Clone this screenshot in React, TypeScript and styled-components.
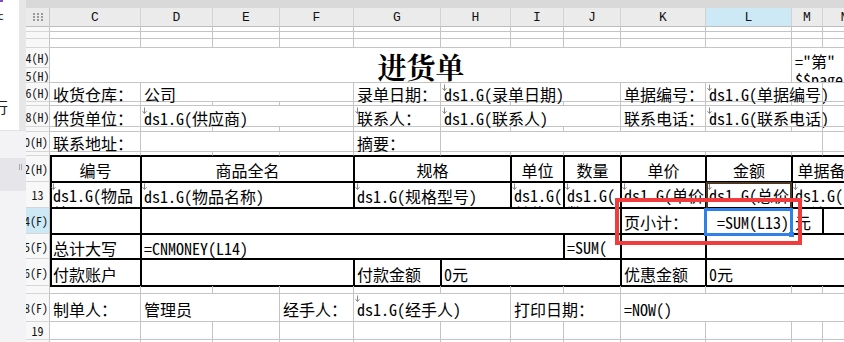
import React from "react";
import styled, { createGlobalStyle, css } from "styled-components";

const GlobalStyle = createGlobalStyle`
  *, *::before, *::after { box-sizing: border-box; }
  html, body { margin: 0; padding: 0; background: #fff; }
  body { font-family: "Noto Sans Mono CJK SC", "Noto Sans CJK SC", sans-serif; }
`;

// column widths C..N, row heights 1..20 (px)
const COLS = [91, 72, 67, 74, 87, 70, 53, 57, 85, 86, 31, 44];
const COL_NAMES = ["C", "D", "E", "F", "G", "H", "I", "J", "K", "L", "M", "N"];
const ROWS = [5, 7, 9, 20, 15, 19, 4, 21, 5, 20, 4, 26, 26, 26, 25, 27, 8, 28, 18, 20];
const ROW_LABELS: Record<number, string> = {
  4: "4(H)", 5: "5(H)", 6: "6(H)", 8: "8(H)", 10: "10(H)", 12: "12(H)", 13: "13",
  14: "14(F)", 15: "15(F)", 16: "16(F)", 18: "18(F)", 19: "19", 20: "20",
};
const ACTIVE_COL = 9;
const ACTIVE_ROW = 14;

const GRID = "#c4c4c4";

type Align = "left" | "center" | "right";

interface CellDef {
  r: number;
  c: number;
  rs?: number;
  cs?: number;
  text?: string;
  lines?: string[];
  align?: Align;
  arrow?: boolean;
  title?: boolean;
}

const DEFS: CellDef[] = [
  { r: 4, c: 0, rs: 2, cs: 10, text: "进货单", title: true, align: "center" },
  { r: 4, c: 10, rs: 2, cs: 2, lines: ['="第"', "$$page_number"] },

  { r: 6, c: 0, text: "收货仓库：" },
  { r: 6, c: 1, cs: 3, text: "公司" },
  { r: 6, c: 4, text: "录单日期：" },
  { r: 6, c: 5, cs: 3, text: "ds1.G(录单日期)", arrow: true },
  { r: 6, c: 8, text: "单据编号：" },
  { r: 6, c: 9, cs: 2, text: "ds1.G(单据编号)", arrow: true },

  { r: 8, c: 0, text: "供货单位：" },
  { r: 8, c: 1, cs: 3, text: "ds1.G(供应商)", arrow: true },
  { r: 8, c: 4, text: "联系人：", arrow: true },
  { r: 8, c: 5, cs: 3, text: "ds1.G(联系人)", arrow: true },
  { r: 8, c: 8, text: "联系电话：" },
  { r: 8, c: 9, cs: 2, text: "ds1.G(联系电话)", arrow: true },

  { r: 10, c: 0, text: "联系地址：" },
  { r: 10, c: 1, cs: 3 },
  { r: 10, c: 4, text: "摘要：" },
  { r: 10, c: 5, cs: 6 },

  { r: 12, c: 0, text: "编号", align: "center" },
  { r: 12, c: 1, cs: 3, text: "商品全名", align: "center" },
  { r: 12, c: 4, cs: 2, text: "规格", align: "center" },
  { r: 12, c: 6, text: "单位", align: "center" },
  { r: 12, c: 7, text: "数量", align: "center" },
  { r: 12, c: 8, text: "单价", align: "center" },
  { r: 12, c: 9, text: "金额", align: "center" },
  { r: 12, c: 10, cs: 2, text: "单据备注", align: "center" },

  { r: 13, c: 0, lines: ["ds1.G(物品", "编号)"], arrow: true },
  { r: 13, c: 1, cs: 3, text: "ds1.G(物品名称)", arrow: true },
  { r: 13, c: 4, cs: 2, text: "ds1.G(规格型号)", arrow: true },
  { r: 13, c: 6, lines: ["ds1.G(", "单位)"], arrow: true },
  { r: 13, c: 7, lines: ["ds1.G(", "数量)"], arrow: true },
  { r: 13, c: 8, lines: ["ds1.G(单价", ")"], arrow: true },
  { r: 13, c: 9, lines: ["ds1.G(总价", ")"], arrow: true },
  { r: 13, c: 10, cs: 2, lines: ["ds1.G(", "备注)"], arrow: true },

  { r: 14, c: 1, cs: 7 },
  { r: 14, c: 8, text: "页小计：" },
  { r: 14, c: 9, text: "=SUM(L13)", align: "right" },
  { r: 14, c: 10, text: "元" },

  { r: 15, c: 0, text: "总计大写" },
  { r: 15, c: 1, cs: 6, text: "=CNMONEY(L14)" },
  { r: 15, c: 7, lines: ["=SUM(", "L14)"] },
  { r: 15, c: 9, cs: 3 },

  { r: 16, c: 0, text: "付款账户" },
  { r: 16, c: 1, cs: 3 },
  { r: 16, c: 4, text: "付款金额" },
  { r: 16, c: 5, cs: 3, text: "0元" },
  { r: 16, c: 8, text: "优惠金额" },
  { r: 16, c: 9, cs: 3, text: "0元" },

  { r: 18, c: 0, text: "制单人：" },
  { r: 18, c: 1, cs: 2, text: "管理员" },
  { r: 18, c: 3, text: "经手人：" },
  { r: 18, c: 4, cs: 2, text: "ds1.G(经手人)", arrow: true },
  { r: 18, c: 6, cs: 2, text: "打印日期：" },
  { r: 18, c: 8, cs: 4, text: "=NOW()" },
];

// fill every uncovered cell with an empty one so the gridlines show
function buildCells(): CellDef[] {
  const taken = new Set<string>();
  DEFS.forEach((d) => {
    for (let r = d.r; r < d.r + (d.rs ?? 1); r++)
      for (let c = d.c; c < d.c + (d.cs ?? 1); c++) taken.add(`${r}-${c}`);
  });
  const out = [...DEFS];
  ROWS.forEach((_, ri) => {
    COLS.forEach((__, c) => {
      const r = ri + 1;
      if (!taken.has(`${r}-${c}`)) out.push({ r, c });
    });
  });
  return out;
}

const Screen = styled.div`
  width: 844px;
  height: 342px;
  overflow: hidden;
  display: flex;
  background: #fff;
`;

const LeftPanel = styled.div`
  width: 26px;
  flex: none;
  display: flex;
  flex-direction: column;
`;

const LeftTop = styled.div`
  height: 130px;
  display: flex;
`;

const LeftWhite = styled.div`
  width: 19px;
  background: #fff;
  overflow: hidden;
  display: flex;
  flex-direction: column;
  color: #222;
`;

const Accent = styled.div`
  width: 3px;
  height: 2px;
  background: #7a4fc0;
`;

const Clipped = styled.div<{ $size: number; $shift: number; $gap: number }>`
  margin-top: ${(p) => p.$gap}px;
  margin-left: ${(p) => p.$shift}px;
  font-size: ${(p) => p.$size}px;
  line-height: 1;
  white-space: nowrap;
  font-family: "Noto Sans CJK SC", sans-serif;
`;

const LeftStrip = styled.div`
  width: 7px;
  background: #e7e7e7;
`;

const LeftBottom = styled.div`
  flex: 1;
  background: #f3f3f5;
  padding-top: 27px;
  border-top: 1px solid #e2e2e2;
`;

const LeftBand = styled.div`
  height: 33px;
  background: #e6e6ea;
  display: flex;
  justify-content: flex-end;
  padding: 6px 4px 0 0;
`;

const Grip = styled.div`
  width: 3px;
  height: 6px;
  border-left: 1px solid #aaa;
  border-right: 1px solid #aaa;
`;

const Sheet = styled.div`
  flex: 1;
  display: flex;
  flex-direction: column;
  overflow: hidden;
`;

const TopBand = styled.div`
  height: 8px;
  flex: none;
  background: #d9d9d9;
`;

const Grid = styled.div`
  display: grid;
  grid-template-columns: 24px ${COLS.map((w) => `${w}px`).join(" ")};
  grid-template-rows: 19px ${ROWS.map((h) => `${h}px`).join(" ")};
`;

const Corner = styled.div`
  grid-row: 1;
  grid-column: 1;
  background: #ebebeb;
  border-right: 1px solid #c8c8c8;
  border-bottom: 1px solid #bdbdbd;
  display: flex;
  align-items: center;
  justify-content: center;
`;

const ColHead = styled.div<{ $col: number; $active: boolean }>`
  grid-row: 1;
  grid-column: ${(p) => p.$col + 2};
  background: ${(p) => (p.$active ? "#cde9f6" : "#ebebeb")};
  border-right: 1px solid #d2d2d2;
  border-bottom: 1px solid #bdbdbd;
  display: flex;
  align-items: center;
  justify-content: center;
  padding-top: 1px;
  font: 13px "Liberation Mono", monospace;
  color: #111;
  overflow: hidden;
`;

const RowHead = styled.div<{ $row: number; $active: boolean; $fit: boolean }>`
  grid-row: ${(p) => p.$row + 1};
  grid-column: 1;
  background: ${(p) => (p.$active ? "#cde9f6" : "#f8f8f8")};
  border-right: 1px solid ${GRID};
  border-bottom: 1px solid #d6d6d6;
  display: flex;
  align-items: center;
  justify-content: ${(p) => (p.$fit ? "center" : "flex-end")};
  padding-right: ${(p) => (p.$fit ? 0 : 1)}px;
  font: 12px "Noto Sans Mono CJK SC", "Liberation Mono", monospace;
  color: #111;
  overflow: hidden;
  white-space: nowrap;
`;

const justify = { left: "flex-start", center: "center", right: "flex-end" };

const Cell = styled.div<{
  $r: number;
  $c: number;
  $rs: number;
  $cs: number;
  $align: Align;
  $wrap: boolean;
  $rb: boolean;
  $bb: boolean;
  $lb: boolean;
}>`
  position: relative;
  min-width: 0;
  min-height: 0;
  grid-row: ${(p) => p.$r + 1} / span ${(p) => p.$rs};
  grid-column: ${(p) => p.$c + 2} / span ${(p) => p.$cs};
  border-right: 1px solid ${(p) => (p.$rb ? "#000" : GRID)};
  border-bottom: 1px solid ${(p) => (p.$bb ? "#000" : GRID)};
  box-shadow: ${(p) =>
    [
      p.$rb ? "1px 0 0 #000" : null,
      p.$bb ? "0 1px 0 #000" : null,
      p.$lb ? "inset 2px 0 0 #000" : null,
    ]
      .filter(Boolean)
      .join(", ") || "none"};
  display: flex;
  flex-direction: column;
  justify-content: ${(p) => (p.$wrap ? "flex-start" : "center")};
  align-items: ${(p) => justify[p.$align]};
  padding: ${(p) => (p.$wrap ? "4px 2px 0 3px" : "3px 2px 0 3px")};
  overflow: ${(p) => (p.$wrap ? "hidden" : "visible")};
  font-size: 16px;
  line-height: ${(p) => (p.$wrap ? 18 : 20)}px;
  white-space: nowrap;
  color: #000;
`;

const Title = styled.span`
  font-family: "Noto Serif CJK SC", "Noto Sans CJK SC", serif;
  font-size: 29px;
  font-weight: 700;
  line-height: 32px;
`;

const Marker = styled.svg`
  position: absolute;
  top: 1px;
  left: 1px;
`;

const overlay = css`
  pointer-events: none;
  z-index: 2;
  position: relative;
`;

const RefFrame = styled.div`
  ${overlay};
  grid-row: 14;
  grid-column: 11;
  border: 2px solid #4e3720;
  border-bottom: none;
`;

const Selection = styled.div`
  ${overlay};
  grid-row: 15;
  grid-column: 11;
  margin: 0 -1px -2px -2px;
  border: 3px solid #2f80e8;
`;

const Handle = styled.div`
  position: absolute;
  right: -4px;
  bottom: -4px;
  width: 5px;
  height: 5px;
  background: #2f80e8;
`;

const Highlight = styled.div`
  ${overlay};
  z-index: 3;
  grid-row: 15;
  grid-column: 10 / span 2;
  margin: -10px -10px -11px -6px;
  border: 4px solid #f03c3c;
`;

const ArrowMark = () => (
  <Marker width="5" height="7" viewBox="0 0 5 7">
    <path d="M2.5 0.5V6.5M0.5 4.2L2.5 6.5L4.5 4.2" stroke="#8a8a8a" strokeWidth="1" fill="none" />
  </Marker>
);

const DotGrid = () => (
  <svg width="10" height="8" viewBox="0 0 10 8">
    {[0, 1, 2].map((i) =>
      [0, 1, 2].map((j) => <rect key={`${i}-${j}`} x={i * 4} y={j * 3} width="2" height="2" fill="#9a9a9a" />)
    )}
  </svg>
);

const SheetCell: React.FC<{ d: CellDef }> = ({ d }) => {
  const rs = d.rs ?? 1;
  const cs = d.cs ?? 1;
  const end = d.r + rs - 1;
  const inTable = d.r >= 12 && end <= 16;
  return (
    <Cell
      $r={d.r}
      $c={d.c}
      $rs={rs}
      $cs={cs}
      $align={d.align ?? "left"}
      $wrap={!!d.lines}
      $rb={inTable}
      $bb={end >= 11 && end <= 16}
      $lb={inTable && d.c === 0}
    >
      {d.arrow && <ArrowMark />}
      {d.title ? <Title>{d.text}</Title> : d.text}
      {d.lines?.map((l, i) => <span key={i}>{l}</span>)}
    </Cell>
  );
};

export default function App() {
  const cells = buildCells();
  return (
    <>
      <GlobalStyle />
      <Screen>
        <LeftPanel>
          <LeftTop>
            <LeftWhite>
              <Accent />
              <Clipped $size={11} $shift={-2} $gap={8}>c</Clipped>
              <Clipped $size={15} $shift={-7} $gap={78}>行</Clipped>
            </LeftWhite>
            <LeftStrip />
          </LeftTop>
          <LeftBottom>
            <LeftBand>
              <Grip />
            </LeftBand>
          </LeftBottom>
        </LeftPanel>
        <Sheet>
          <TopBand />
          <Grid>
            <Corner>
              <DotGrid />
            </Corner>
            {COL_NAMES.map((n, i) => (
              <ColHead key={n} $col={i} $active={i === ACTIVE_COL}>
                {n}
              </ColHead>
            ))}
            {ROWS.map((_, i) => {
              const label = ROW_LABELS[i + 1] ?? "";
              return (
                <RowHead key={i} $row={i + 1} $active={i + 1 === ACTIVE_ROW} $fit={label.length <= 4}>
                  {label}
                </RowHead>
              );
            })}
            {cells.map((d) => (
              <SheetCell key={`${d.r}-${d.c}`} d={d} />
            ))}
            <RefFrame />
            <Selection>
              <Handle />
            </Selection>
            <Highlight />
          </Grid>
        </Sheet>
      </Screen>
    </>
  );
}
